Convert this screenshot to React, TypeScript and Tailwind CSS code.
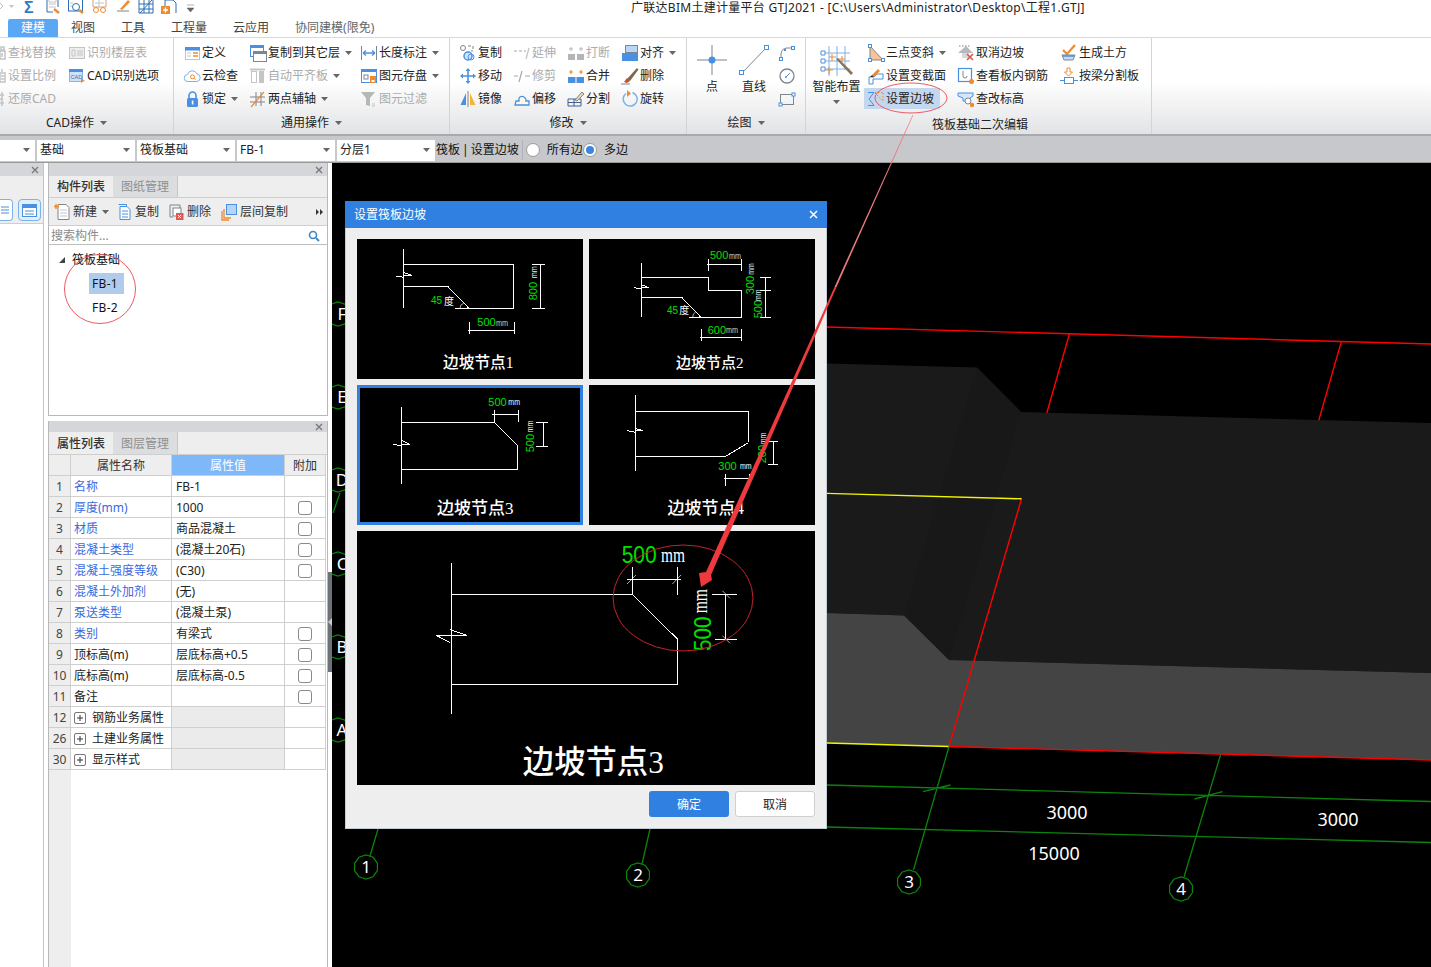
import React from "react";

const B = "#4a90e2", O = "#ef8a2f", G = "#7d858e", L = "#c2c4c6";

const I: Record<string, React.ReactNode> = {
  find: <path d="M12 3h3v3h-3zM11 7h5v8h-5zM13 9v4" stroke={L} strokeWidth="1.5" />,
  ratio: <path d="M13 2v3M11 6h5v9h-5zM12 9h3M12 12h3" stroke={L} strokeWidth="1.5" />,
  restore: <path d="M13 2v14M11 5h4M11 13h4M11 9h3" stroke={L} strokeWidth="1.5" />,
  tableRead: <><rect x="1.5" y="3.5" width="15" height="11" stroke={L} fill="#eee" /><path d="M4 6h3v6H4zM9 7h6M9 9h6M9 11h6" stroke={L} /></>,
  cadOpt: <><rect x="1.5" y="2.5" width="13" height="12" fill="#cfe1f6" stroke="#8db6e6" /><rect x="1" y="2" width="14" height="3" fill={B} /><text x="2.6" y="12" fontSize="5.5" fill="#3b6fb0" fontFamily="Liberation Sans">CAD</text><path d="M13 11l4 3-3 1-1 2z" fill={O} /></>,
  define: <><rect x="2.5" y="3.5" width="14" height="12" fill="#fff" stroke={L} /><rect x="2" y="3" width="15" height="3.5" fill={B} /><path d="M4 9h4M4 12h4" stroke={L} /><path d="M10 9h5M10 12h5" stroke={O} strokeWidth="1.6" /></>,
  cloud: <><path d="M5 14.5a3.5 3.5 0 0 1-.5-7 5 5 0 0 1 9.5-.5 3.8 3.8 0 0 1 0 7.5z" stroke="#7ab2ea" fill="#fff" /><circle cx="9.5" cy="9.8" r="2" stroke={O} /><path d="M11 11.3l1.5 1.2" stroke={O} /></>,
  lock: <><path d="M6 8V5.500a3.500 3.500 0 0 1 7 0V8" stroke={B} strokeWidth="1.6" /><rect x="4" y="8" width="11" height="9" rx="1.500" fill={B} /><rect x="8.800" y="10.500" width="1.600" height="4" fill="#fff" /></>,
  copyLayer: <><rect x="1.500" y="1.500" width="13" height="11" fill="#fff" stroke={B} /><rect x="1" y="1" width="14" height="3" fill={B} /><rect x="4.500" y="7.500" width="13" height="10" fill="#fff" stroke={G} /><rect x="4" y="7" width="14" height="3" fill={G} /></>,
  autoAlign: <><path d="M1 2.500h15" stroke={L} strokeWidth="2" /><rect x="2.500" y="4.500" width="5" height="11" stroke={L} /><rect x="10" y="4" width="5" height="12" fill={L} /></>,
  twoPoint: <><path d="M1 7h15M1 12h15M7 2v14M12 2v14" stroke={G} /><path d="M2 17L15 2" stroke={O} strokeWidth="1.200" /></>,
  lenDim: <><path d="M1.500 2v14M16.500 2v14" stroke={G} /><path d="M3 9h12M3 9l3-2.500M3 9l3 2.500M15 9l-3-2.500M15 9l-3 2.500" stroke={B} strokeWidth="1.300" /></>,
  save: <><rect x="1.500" y="2.500" width="15" height="13" fill="#fff" stroke={B} /><rect x="1" y="2" width="16" height="3" fill={B} /><rect x="4" y="8" width="4" height="4" stroke={G} /><rect x="10" y="9" width="6" height="7" fill={O} /><rect x="11.500" y="13" width="3" height="2" fill="#fff" /></>,
  filter: <><path d="M1 2h14l-5 6v8l-4-1V8z" fill="#b5b7b9" /><path d="M12 14h3M12 16h3" stroke={L} /></>,
  copy: <><circle cx="4" cy="4" r="2.500" stroke={G} /><path d="M9 2h3M14 2v3M12 7h2" stroke={G} /><circle cx="9" cy="12" r="4" stroke={B} strokeWidth="1.500" fill="#d6e7fa" /><circle cx="12" cy="13" r="3" stroke={B} /></>,
  move: <path d="M9 1l-2.500 3h5zM9 17l-2.500-3h5zM1 9l3-2.500v5zM17 9l-3-2.500v5zM8.200 4h1.600v10H8.200zM4 8.200h10v1.600H4z" fill={B} />,
  mirror: <><path d="M7 3L1.500 15H7z" fill={B} /><path d="M11 3l5.500 12H11z" fill="#f4b43a" /><path d="M9 1v16" stroke={G} /></>,
  extend: <path d="M1 7h3M6 7h3M11 7h2M13 15l3-11" stroke={L} strokeWidth="1.300" />,
  trim: <path d="M1 9h4M12 9h5M6 15l3-11" stroke={G} strokeOpacity="0.7" strokeWidth="1.200" />,
  offset: <path d="M2 15h14v-4h-3a3 3 0 0 0-1-3 3.500 3.500 0 0 0-6 0v3H3z" stroke={B} strokeWidth="1.300" fill="#fff8e8" />,
  breakI: <><rect x="1" y="10" width="7" height="6" fill="#b3b5b8" /><rect x="10" y="10" width="7" height="6" fill="#b3b5b8" /><path d="M4 3v4M2 5h4M14 3v4M12 5h4" stroke="#b3b5b8" /></>,
  merge: <><rect x="1" y="10" width="7.500" height="6" fill={B} /><rect x="9.500" y="10" width="7.500" height="6" fill={B} /><path d="M4 3v4M2 5h4M14 3v4M12 5h4" stroke={O} strokeWidth="1.200" /></>,
  split: <><path d="M1 9h13v7H1zM1 12.500h13M7 9v7" stroke="#41618c" /><path d="M8 10l7-8 2 2-7 7z" fill="#e8d9b0" stroke={G} /></>,
  align: <><rect x="4.500" y="1.500" width="12" height="7" fill="#b9d6f5" stroke={G} /><rect x="1" y="9" width="16" height="8" fill={B} /></>,
  del: <><path d="M6 12L16 1l1.500 1.500L9 14z" fill="#7b6a4d" /><path d="M3 15l3-4 3 3-3 2z" fill="#c4512d" /><path d="M0 17h9" stroke={G} /></>,
  rotate: <><path d="M5 3.500a7 7 0 1 0 6.500-1" stroke="#7ab2ea" strokeWidth="1.500" /><path d="M6 0v7l4-3.500z" fill={O} /></>,
  slope3: <><path d="M3 2v14h13z" fill="#f7c39a" stroke={G} /><rect x="1.500" y="0.500" width="3" height="3" fill="#fff" stroke={B} /><rect x="1.500" y="14.500" width="3" height="3" fill="#fff" stroke={B} /><rect x="14.500" y="14.500" width="3" height="3" fill="#fff" stroke={B} /></>,
  varSec: <><path d="M2 10h5l3-3h6v5H6v5H2z" stroke={B} fill="#fff" /><path d="M5 8l6-6 2 2-6 6z" fill={O} /><path d="M3 10l2-2 2 2" fill="#333" /></>,
  setSlope: <><path d="M1 2.500h6l-5 6.500 5 6.500H1" stroke={B} fill="none" /><path d="M8 2.500h8M8 3l8 8M16 3v8" stroke={O} strokeDasharray="1.500 1.500" /></>,
  cancel: <><path d="M1 9l8-7 7 7H1z" fill="#b5b9bd" /><rect x="5" y="9" width="7" height="5" fill="#d6d8da" /><path d="M2 2h12" stroke={G} strokeDasharray="1.500 1.500" /><path d="M10 10l6 6M16 10l-6 6" stroke="#d9534f" strokeWidth="1.600" /></>,
  viewRebar: <><rect x="1.500" y="1.500" width="13" height="13" stroke={B} fill="#fff" strokeWidth="1.200" /><path d="M6 4v5a2 2 0 0 0 4 0" stroke={G} /><circle cx="14.500" cy="14.500" r="2.500" fill={O} /></>,
  chgElev: <><path d="M1 3h15v3l-3 2v3H6V8L1 6z" fill="#d6e7fa" stroke={B} /><circle cx="11" cy="11" r="3" stroke={G} fill="#fff" /><circle cx="15" cy="15" r="2.200" fill={O} /></>,
  earth: <><path d="M3 6l4 4 8-9" stroke={O} strokeWidth="2.200" /><path d="M2 11h13l-2 5H4z" fill="#c7dbf3" stroke={G} /><path d="M3 12h11" stroke={B} strokeWidth="1.500" /></>,
  beamSplit: <><path d="M7 1h3v4h2.500L8.500 9 4.500 5H7z" stroke={O} fill="#fff" /><rect x="4.500" y="10.500" width="9" height="6" stroke={B} fill="#fff" /><path d="M0 13.500h4M14 13.500h4" stroke={B} /></>,
  arc: <><path d="M3 16V10a6 6 0 0 1 6-6h5" stroke={G} /><rect x="1.500" y="13.500" width="3" height="3" fill="#fff" stroke={B} /><rect x="13.500" y="2.500" width="3" height="3" fill="#fff" stroke={B} /><rect x="6" y="5" width="2" height="2" fill={B} /></>,
  circ: <><circle cx="9" cy="9" r="7" stroke={G} strokeWidth="1.300" /><path d="M8 10l4-4" stroke={B} /><circle cx="8" cy="10" r="1" fill={B} /></>,
  rectI: <><rect x="2.500" y="4.500" width="13" height="10" stroke={G} /><rect x="1" y="13" width="3" height="3" fill="#fff" stroke={B} /><rect x="14" y="3" width="3" height="3" fill="#fff" stroke={B} /></>,
  newI: <><path d="M4 1.500h8l3 3v12H4z" fill="#fff" stroke={G} /><path d="M6 7h7M6 10h7M6 13h7" stroke={L} /><path d="M2 1v5M0 3.500h5" stroke={O} strokeWidth="1.400" /></>,
  copyDoc: <><path d="M3.500 1.500h8v2" stroke={B} /><path d="M5 3.500h7l3 3v10H5z" fill="#fff" stroke={B} /><path d="M7 8h6M7 11h6M7 14h6" stroke={B} /></>,
  delDoc: <><path d="M3 2h10v3M3 2v12h3" stroke={G} /><rect x="6" y="5" width="8" height="8" stroke={G} fill="#fff" /><rect x="9" y="10" width="7.500" height="7" fill="#dc5b57" /><path d="M11 12l3 3M14 12l-3 3" stroke="#fff" /></>,
  layerCopy: <><path d="M2 8v9h7M4 6v9h7" stroke={O} strokeWidth="1.300" /><rect x="6.500" y="1.500" width="10" height="10" fill="#b7d5f6" stroke={B} /></>,
  q1: <><path d="M3 0v12h6M14 0v7" stroke="#2d6fb4" /><path d="M5 -1h7v3H5zM5 4h7M5 7h7" stroke={L} /><path d="M10 9l5 4" stroke={O} strokeWidth="2.500" /></>,
  q2: <><rect x="1.500" y="-3" width="14" height="14" stroke="#2d6fb4" fill="#fff" /><circle cx="9" cy="7" r="3.500" stroke="#2d6fb4" /><path d="M12 10l4 3" stroke={O} strokeWidth="2.500" /><path d="M3 3h3M3 6h2" stroke={L} /></>,
  q3: <><path d="M2-2h13v9H2z" stroke="#d99a7a" fill="#fff" /><path d="M4 3h9M8-2v9" stroke={L} /><circle cx="5" cy="10" r="2.500" stroke={O} /><circle cx="12" cy="10" r="2.500" stroke={O} /></>,
  q4: <><path d="M3 11h12" stroke={G} /><path d="M6 9l8-9 2 2-8 8z" fill={O} /></>,
  q5: <path d="M1 0v13h14V0M1 4h14M1 9h14M6 0v13M11 0v13M2 13l12-13" stroke="#2d6fb4" />,
  q6: <><path d="M4 13V0h8l3 3v10" stroke="#2d6fb4" /><rect x="0" y="6" width="9" height="8" fill={O} /><path d="M4.500 7.500v5M2 10h5" stroke="#fff" strokeWidth="1.400" /></>,
};

function Ic({ n, cls = "" }: { n: string; cls?: string }) {
  return (
    <svg width="18" height="18" viewBox="0 0 18 18" fill="none" className={"shrink-0 " + cls}>
      {I[n]}
    </svg>
  );
}

function Caret({ cls = "" }: { cls?: string }) {
  return (
    <svg width="7" height="4" viewBox="0 0 7 4" className={"shrink-0 " + cls}>
      <path d="M0 0h7L3.500 4z" fill="#666" />
    </svg>
  );
}

type It = { n: string; t: string; off?: boolean; caret?: boolean };

function Item({ n, t, off, caret }: It) {
  return (
    <div className={"flex items-center h-[23px] whitespace-nowrap " + (off ? "text-[#ababab]" : "text-[#222222]")}>
      <Ic n={n} cls="mr-px" />
      <span>{t}</span>
      {caret && <Caret cls="ml-[5px]" />}
    </div>
  );
}

function Col({ w, items, cls = "" }: { w: string; items: It[]; cls?: string }) {
  return (
    <div className={"flex flex-col shrink-0 " + w + " " + cls}>
      {items.map((i) => (
        <Item key={i.t} {...i} />
      ))}
    </div>
  );
}

function Group({ w, label, labelCls = "pt-[2px]", children, caret = true }: { w: string; label: string; labelCls?: string; children: React.ReactNode; caret?: boolean }) {
  return (
    <div className={"flex flex-col shrink-0 h-full border-r border-[#d2d4d6] overflow-hidden " + w}>
      <div className="flex h-[72px] pt-[3px]">{children}</div>
      <div className={"flex-1 flex items-center justify-center gap-[6px] text-[#222222] " + labelCls}>
        <span>{label}</span>
        {caret && <Caret />}
      </div>
    </div>
  );
}

function Ribbon() {
  return (
    <div className="flex h-[96px] bg-linear-to-b from-white from-45% to-[#e2e3e5]">
      <Group w="w-[174px]" label="CAD操作" labelCls="pr-[20px] pt-[2px]">
        <Col w="w-[79px] -ml-[11px]" items={[{ n: "find", t: "查找替换", off: true }, { n: "ratio", t: "设置比例", off: true }, { n: "restore", t: "还原CAD", off: true }]} />
        <Col w="w-[100px]" items={[{ n: "tableRead", t: "识别楼层表", off: true }, { n: "cadOpt", t: "CAD识别选项" }]} />
      </Group>
      <Group w="w-[276px]" label="通用操作">
        <Col w="w-[66px] ml-[9px]" items={[{ n: "define", t: "定义" }, { n: "cloud", t: "云检查" }, { n: "lock", t: "锁定", caret: true }]} />
        <Col w="w-[111px]" items={[{ n: "copyLayer", t: "复制到其它层", caret: true }, { n: "autoAlign", t: "自动平齐板", off: true, caret: true }, { n: "twoPoint", t: "两点辅轴", caret: true }]} />
        <Col w="w-[85px]" items={[{ n: "lenDim", t: "长度标注", caret: true }, { n: "save", t: "图元存盘", caret: true }, { n: "filter", t: "图元过滤", off: true }]} />
      </Group>
      <Group w="w-[237px]" label="修改">
        <Col w="w-[54px] ml-[9px]" items={[{ n: "copy", t: "复制" }, { n: "move", t: "移动" }, { n: "mirror", t: "镜像" }]} />
        <Col w="w-[54px]" items={[{ n: "extend", t: "延伸", off: true }, { n: "trim", t: "修剪", off: true }, { n: "offset", t: "偏移" }]} />
        <Col w="w-[54px]" items={[{ n: "breakI", t: "打断", off: true }, { n: "merge", t: "合并" }, { n: "split", t: "分割" }]} />
        <Col w="w-[60px]" items={[{ n: "align", t: "对齐", caret: true }, { n: "del", t: "删除" }, { n: "rotate", t: "旋转" }]} />
      </Group>
      <Group w="w-[119px]" label="绘图">
        <div className="flex flex-col items-center w-[50px] pt-[3px]">
          <svg width="32" height="32" viewBox="0 0 32 32" fill="none">
            <path d="M16 1v30M1 16h30" stroke={G} />
            <circle cx="16" cy="16" r="3.500" fill={B} />
          </svg>
          <span className="mt-[3px] leading-4 text-[#222222]">点</span>
        </div>
        <div className="flex flex-col items-center w-[34px] pt-[3px]">
          <svg width="32" height="32" viewBox="0 0 32 32" fill="none">
            <path d="M4 29L28 4" stroke={G} />
            <rect x="1.500" y="26.500" width="4" height="4" fill="#fff" stroke={B} />
            <rect x="26.500" y="1.500" width="4" height="4" fill="#fff" stroke={B} />
          </svg>
          <span className="mt-[3px] leading-4 text-[#222222] whitespace-nowrap">直线</span>
        </div>
        <div className="flex flex-col ml-[7px]">
          {["arc", "circ", "rectI"].map((n) => (
            <div key={n} className="h-[23px] flex items-center">
              <Ic n={n} />
            </div>
          ))}
        </div>
      </Group>
      <Group w="w-[346px]" label="筏板基础二次编辑" caret={false} labelCls="pl-[3px] pt-[6px]">
        <div className="flex flex-col items-center w-[61px] pt-[3px]">
          <svg width="34" height="34" viewBox="0 0 34 34" fill="none">
            <path d="M2 9h28M2 17h28M2 25h28M9 2v30M17 2v30M25 2v24" stroke="#7fb0e6" />
            <path d="M1 7h4v4H1zM1 15h4v4H1zM1 23h4v4H1z" fill="#fff" stroke={B} />
            <path d="M16 15l15 16 2-2-15-15z" fill="#8b7350" />
            <path d="M12 10v7M9 13h7M22 12v6M19 15h6M9 23v7M6 26h7" stroke={O} />
          </svg>
          <span className="mt-[1px] leading-4 text-[#222222] whitespace-nowrap">智能布置</span>
          <Caret cls="mt-[5px]" />
        </div>
        <div className="flex flex-col w-[90px] shrink-0">
          <Item n="slope3" t="三点变斜" caret />
          <Item n="varSec" t="设置变截面" />
          <div className="flex items-center h-[21px] mt-px w-[76px] -ml-[3px] pl-[3px] bg-[#c3d7ef] text-[#222222]">
            <Ic n="setSlope" cls="mr-px" />
            <span>设置边坡</span>
          </div>
        </div>
        <Col w="w-[103px]" items={[{ n: "cancel", t: "取消边坡" }, { n: "viewRebar", t: "查看板内钢筋" }, { n: "chgElev", t: "查改标高" }]} />
        <Col w="w-[90px]" items={[{ n: "earth", t: "生成土方" }, { n: "beamSplit", t: "按梁分割板" }]} />
      </Group>
    </div>
  );
}

function Select({ w, t }: { w: string; t: string }) {
  return (
    <div className={"flex items-center justify-between h-[21px] bg-white pl-[3px] pr-[5px] text-[#222222] shrink-0 " + w}>
      <span>{t}</span>
      <Caret />
    </div>
  );
}

function Radio({ on }: { on?: boolean }) {
  return (
    <span className="flex items-center justify-center w-[14px] h-[14px] rounded-full bg-white border border-[#9a9a9a] shrink-0">
      {on && <span className="w-[8px] h-[8px] rounded-full bg-[#3a86dc]" />}
    </span>
  );
}

function PropBar() {
  return (
    <div className="flex items-center h-[29px] pt-[2px] bg-[#c6c8cb] border-t-2 border-[#a8aaad] border-b border-b-[#9a9a9a] gap-[2px] text-[#111111] whitespace-nowrap">
      <Select w="w-[35px]" t="" />
      <Select w="w-[98px]" t="基础" />
      <Select w="w-[98px]" t="筏板基础" />
      <Select w="w-[98px]" t="FB-1" />
      <Select w="w-[98px]" t="分层1" />
      <span className="-ml-px [word-spacing:-1px]">筏板 | 设置边坡</span>
      <span className="w-px h-[20px] bg-[#b0b2b5] ml-[1px]" />
      <span className="ml-[1px]"><Radio /></span>
      <span className="ml-[5px]">所有边</span>
      <span className="-ml-[2px]"><Radio on /></span>
      <span className="ml-[5px]">多边</span>
    </div>
  );
}

function PanelHead({ h = "h-[13px]" }: { h?: string }) {
  return (
    <div className={"bg-[#d4d6da] flex items-center justify-end pr-[4px] shrink-0 " + h}>
      <svg width="8" height="8" viewBox="0 0 8 8"><path d="M1 1l6 6M7 1L1 7" stroke="#777" strokeWidth="1.300" /></svg>
    </div>
  );
}

function Tabs({ a, b, h = "h-[22px]" }: { a: string; b: string; h?: string }) {
  return (
    <div className={"flex bg-[#eeeeee] shrink-0 border-b border-[#cfcfcf] " + h}>
      <div className="w-[64px] flex items-center justify-center pt-px font-medium text-[#333333]">{a}</div>
      <div className="w-[65px] flex items-center justify-center pt-px bg-[#dcdddf] text-[#8f8f8f] border-r border-[#c8c8c8]">{b}</div>
    </div>
  );
}

const rows: [string, string, boolean, string, boolean][] = [
  ["1", "名称", true, "FB-1", false],
  ["2", "厚度(mm)", true, "1000", true],
  ["3", "材质", true, "商品混凝土", true],
  ["4", "混凝土类型", true, "(混凝土20石)", true],
  ["5", "混凝土强度等级", true, "(C30)", true],
  ["6", "混凝土外加剂", true, "(无)", false],
  ["7", "泵送类型", true, "(混凝土泵)", false],
  ["8", "类别", true, "有梁式", true],
  ["9", "顶标高(m)", false, "层底标高+0.5", true],
  ["10", "底标高(m)", false, "层底标高-0.5", true],
  ["11", "备注", false, "", true],
];
const groups: [string, string][] = [["12", "钢筋业务属性"], ["26", "土建业务属性"], ["30", "显示样式"]];

function PropTable() {
  const cell = "h-[21px] flex items-center pt-px border-b border-r border-[#cfcfcf] ";
  return (
    <div className="flex-1 relative">
      <div className="absolute left-0 top-0 bottom-0 w-[22px] bg-[#eeeeee]" />
      <div className="relative grid grid-cols-[22px_101px_113px_41px] w-[277px]">
        <div className={cell + "bg-[#eeeeee]"} />
        <div className={cell + "bg-[#eeeeee] justify-center text-[#333333]"}>属性名称</div>
        <div className={cell + "bg-[#7eb8f8] justify-center text-white"}>属性值</div>
        <div className={cell + "bg-[#eeeeee] justify-center text-[#333333]"}>附加</div>
        {rows.map(([i, n, blue, v, c]) => (
          <React.Fragment key={i}>
            <div className={cell + "bg-[#eeeeee] justify-center text-[#444444]"}>{i}</div>
            <div className={cell + "pl-[3px] bg-white " + (blue ? "text-[#3a68e0]" : "text-[#222222]")}>{n}</div>
            <div className={cell + "pl-[4px] bg-white text-[#222222]"}>{v}</div>
            <div className={cell + "justify-center bg-white"}>
              {c && <span className="w-[14px] h-[14px] rounded-[3px] border border-[#8a8a8a] bg-white" />}
            </div>
          </React.Fragment>
        ))}
        {groups.map(([i, n]) => (
          <React.Fragment key={i}>
            <div className={cell + "bg-[#eeeeee] justify-center text-[#444444]"}>{i}</div>
            <div className={cell + "pl-[3px] bg-white text-[#222222]"}>
              <span className="w-[12px] h-[12px] mr-[6px] rounded-[2px] border border-[#777777] flex items-center justify-center">
                <svg width="8" height="8" viewBox="0 0 8 8"><path d="M4 1v6M1 4h6" stroke="#333" /></svg>
              </span>
              {n}
            </div>
            <div className={cell + "bg-[#ebebeb]"} />
            <div className={cell + "bg-white"} />
          </React.Fragment>
        ))}
      </div>
    </div>
  );
}

function LeftCol() {
  return (
    <div className="w-[44px] shrink-0 flex flex-col border-r border-[#c4c4c4]">
      <PanelHead />
      <div className="h-[48px] bg-[#eeeeee] border-b border-[#cfcfcf] flex items-end pb-[2px] gap-[5px] overflow-hidden">
        <div className="w-[13px] h-[22px] rounded-r-[4px] border border-l-0 border-[#7ab2ea] bg-white flex items-center justify-center">
          <svg width="10" height="10" viewBox="0 0 10 10"><path d="M0 2h8M0 5h8M0 8h8" stroke={B} /></svg>
        </div>
        <div className="w-[23px] h-[22px] rounded-[4px] border border-[#7ab2ea] bg-[#e3effc] flex items-center justify-center">
          <svg width="15" height="13" viewBox="0 0 15 13"><rect x="0.500" y="0.500" width="14" height="12" fill="#fff" stroke={B} /><rect width="15" height="4" fill={B} /><path d="M3 7h9M3 10h9" stroke={B} /></svg>
        </div>
      </div>
    </div>
  );
}

function CompPanel() {
  return (
    <div className="h-[253px] flex flex-col shrink-0 border border-t-0 border-[#b8b8b8]">
      <PanelHead />
      <Tabs a="构件列表" b="图纸管理" />
      <div className="flex items-center h-[28px] pt-px bg-[#eeeeee] border-b border-[#cfcfcf] pl-[5px] text-[#333333] shrink-0 relative">
        <Ic n="newI" />
        <span className="ml-[1px]">新建</span>
        <Caret cls="ml-[5px]" />
        <Ic n="copyDoc" cls="ml-[6px]" />
        <span className="ml-[2px]">复制</span>
        <Ic n="delDoc" cls="ml-[8px]" />
        <span className="ml-[2px]">删除</span>
        <Ic n="layerCopy" cls="ml-[9px]" />
        <span className="ml-[2px]">层间复制</span>
        <svg width="8" height="6" viewBox="0 0 8 6" className="ml-auto mr-[3px]"><path d="M0 0l3 3-3 3zM4 0l3 3-3 3z" fill="#333" /></svg>
      </div>
      <div className="flex items-center justify-between h-[19px] pt-px bg-white border-b border-[#bdbdbd] pl-[2px] pr-[7px] text-[#8a8a8a] shrink-0">
        <span>搜索构件...</span>
        <svg width="12" height="12" viewBox="0 0 12 12" fill="none"><circle cx="5" cy="5" r="3.500" stroke="#3a86c8" strokeWidth="1.600" /><path d="M8 8l3 3" stroke="#3a86c8" strokeWidth="1.800" /></svg>
      </div>
      <div className="flex-1 bg-white pt-[7px]">
        <div className="flex items-center h-[16px] pl-[10px] text-[#111111]">
          <svg width="6" height="6" viewBox="0 0 6 6" className="mr-[7px]"><path d="M6 0v6H0z" fill="#444" /></svg>
          <span>筏板基础</span>
        </div>
        <div className="flex flex-col items-start pl-[40px] mt-[5px] gap-[3px] text-[#111111]">
          <div className="w-[35px] h-[21px] pt-px bg-[#b0cced] flex items-center pl-[3px] tracking-[0.3px]">FB-1</div>
          <div className="w-[35px] h-[21px] pt-px flex items-center pl-[3px] tracking-[0.3px]">FB-2</div>
        </div>
      </div>
    </div>
  );
}

function Canvas() {
  const circles: [number, number, string][] = [[366, 867, "1"], [638, 875, "2"], [909, 882, "3"], [1181, 889, "4"]];
  const side: [number, string][] = [[314, "F"], [397, "E"], [480, "D"], [564, "C"], [647, "B"], [730, "A"]];
  const oct = (x: number, y: number, r: number) =>
    Array.from({ length: 10 }, (_, i) => {
      const a = (i * Math.PI) / 5 + Math.PI / 10;
      return (x + r * Math.cos(a)).toFixed(1) + "," + (y + r * Math.sin(a)).toFixed(1);
    }).join(" ");
  return (
    <div className="flex-1 bg-black overflow-hidden">
      <svg viewBox="332 163 1099 804" className="block w-full h-full" fill="none">
        <path d="M827 363.600L977 367.500L1021 412L1431 423V673L949 660L904 615.500L827 613Z" fill="#1a1a1a" />
        <path d="M977 367.500L1021 412L949 660L904 615.500Z" fill="#181818" />
        <path d="M827 613L904 615.500L949 660L1431 673V760L949 746.500L827 743Z" fill="#444444" />
        <path d="M827 327L1431 344M1069.400 334L1046.800 413M1341.400 341.400L1318.800 420.300M1021.500 498.800L949 746.500L1431 760" stroke="#ff0000" strokeWidth="1.400" />
        <path d="M827 493.400L1021.500 498.800M827 743L949 746.500" stroke="#f4f400" strokeWidth="1.400" />
        <path d="M949 746.500L913.500 870M1220.600 754.500L1184 877M827 785L1431 801.500M827 827L1431 842.500M923 791.600L950.500 785M1194.500 799L1222.500 791.600M378 829L370 856M650 829L642 864M340 493L333 513" stroke="#0a840a" strokeWidth="1.300" />
        {circles.map(([x, y, t]) => (
          <g key={t}>
            <polygon points={oct(x, y, 12)} stroke="#0a840a" strokeWidth="1.200" fill="#000" />
            <text x={x} y={y + 6} textAnchor="middle" fill="#fff" fontSize="17" fontFamily="Noto Sans">{t}</text>
          </g>
        ))}
        {side.map(([y, t]) => (
          <g key={t}>
            <polygon points={oct(338, y, 12)} stroke="#0a840a" strokeWidth="1.200" fill="#000" />
            <text x={342} y={y + 6} textAnchor="middle" fill="#fff" fontSize="17" fontFamily="Noto Sans">{t}</text>
          </g>
        ))}
        <g fill="#fff" fontSize="18" fontFamily="Noto Sans" textAnchor="middle">
          <text x="1067" y="819">3000</text>
          <text x="1338" y="826">3000</text>
          <text x="1054" y="860">15000</text>
        </g>
      </svg>
    </div>
  );
}

const GREEN = "#00e000";
function Num({ x, y, t, s = 33, rot, fill = GREEN, font = "Liberation Sans", w }: { x: number; y: number; t: string; s?: number; rot?: boolean; fill?: string; font?: string; w?: number }) {
  return (
    <text x={x} y={y} fontSize={s} fill={fill} stroke="none" fontFamily={font} textLength={w} lengthAdjust={w ? "spacingAndGlyphs" : undefined} transform={rot ? `rotate(-90 ${x} ${y})` : undefined}>
      {t}
    </text>
  );
}

function Title({ x, y, s, t }: { x: number; y: number; s: number; t: string }) {
  return (
    <text x={x} y={y} fontSize={s} fontWeight={500} textAnchor="middle" fill="#fff" stroke="none" fontFamily="'Liberation Serif','Noto Sans CJK SC',serif">
      {t}
    </text>
  );
}

function Diagram({ vb, d, children }: { vb: string; d: string; children: React.ReactNode }) {
  return (
    <svg viewBox={vb} className="block w-full h-full" fill="none" preserveAspectRatio="none">
      <path d={d} stroke="#fff" strokeWidth="3" shapeRendering="crispEdges" />
      {children}
    </svg>
  );
}

function Dialog() {
  return (
    <div className="absolute left-[345px] top-[201px] w-[482px] h-[628px] bg-[#eeeeee] flex flex-col border border-t-0 border-[#c4ccd6]">
      <div className="h-[27px] bg-[#2f80e0] text-white flex items-center justify-between pl-[9px] pr-[9px] -mx-px shrink-0">
        <span>设置筏板边坡</span>
        <svg width="9" height="9" viewBox="0 0 9 9"><path d="M1 1l7 7M8 1L1 8" stroke="#fff" strokeWidth="1.500" /></svg>
      </div>
      <div className="px-[11px] pt-[11px]">
        <div className="grid grid-cols-[226px_226px] grid-rows-[140px_140px] gap-[6px]">
          <div className="bg-black">
            <Diagram vb="36 117 678 420" d="M175 148V323M175 193H505V325H330M175 259H308L372 325M153 228L175 232M178 218L200 226H175M372 365V403M507 365V403M368 392H508M585 192V326M562 192H600M562 326H600">
              <path d="M345 325Q345 312 356 310" stroke="#fff" strokeWidth="2" />
              <Num x={397} y={378} t="500" />
              <Num x={453} y={377} t="mm" s={26} fill="#e8c890" w={36} />
              <Num x={575} y={301} t="800" rot />
              <Num x={575} y={235} t="mm" s={26} fill="#dff" w={36} rot />
              <Num x={258} y={311} t="45" s={30} />
              <Num x={297} y={314} t="度" s={30} fill="#fff" font="Noto Sans CJK SC" />
              <Title x={400} y={504} s={47} t="边坡节点1" />
            </Diagram>
          </div>
          <div className="bg-black">
            <Diagram vb="732 117 678 420" d="M889 190V350M889 232H1090V271H1190V352H1032M889 292H1010L1068 352M868 263L889 267M891 255L912 263H889M1090 178V212M1190 178V212M1086 192H1192M1068 388V424M1190 388V424M1064 412H1192M1262 232V354M1245 232H1278M1245 271H1278M1245 352H1278">
              <path d="M1043 352Q1043 340 1052 336" stroke="#fff" strokeWidth="2" />
              <Num x={1095} y={176} t="500" />
              <Num x={1152} y={176} t="mm" s={26} fill="#b8dcff" w={36} />
              <Num x={1226} y={283} t="300" rot />
              <Num x={1227} y={224} t="mm" s={26} fill="#dff" w={34} rot />
              <Num x={1250} y={355} t="500" rot />
              <Num x={1249} y={303} t="mm" s={26} fill="#dff" w={34} rot />
              <Num x={966} y={341} t="45" s={30} />
              <Num x={1003} y={342} t="度" s={30} fill="#fff" font="Noto Sans CJK SC" />
              <Num x={1088} y={401} t="600" />
              <Num x={1143} y={400} t="mm" s={26} fill="#e8c890" w={36} />
              <Title x={1094} y={505} s={45} t="边坡节点2" />
            </Diagram>
          </div>
          <div className="bg-black border-[3px] border-[#2f80e0]">
            <Diagram vb="45 564 660 402" d="M169 621V851M169 667H448L517 736V808H169M145 733L169 737M172 722L195 733H169M448 630V667M519 630V667M440 642H522M572 667H608M572 738H608M594 667V740">
              <Num x={430} y={617} t="500" />
              <Num x={490} y={615} t="mm" s={28} fill="#fff" w={35} />
              <Num x={566} y={757} t="500" rot />
              <Num x={565} y={697} t="mm" s={28} fill="#fff" w={35} rot />
              <Title x={391} y={943} s={51} t="边坡节点3" />
            </Diagram>
          </div>
          <div className="bg-black">
            <Diagram vb="732 555 678 420" d="M871 585V812M871 634H1210V725M1210 728L1142 769H871M847 692L871 697M874 686L893 692H871M1268 723H1298M1268 792H1298M1284 723V794M1140 822V858M1212 822V858M1136 834H1214">
              <Num x={1264} y={790} t="200" rot />
              <Num x={1262} y={733} t="mm" s={28} fill="#fff" w={35} rot />
              <Num x={1120} y={809} t="300" />
              <Num x={1185} y={808} t="mm" s={28} fill="#fff" w={35} />
              <Title x={1082} y={943} s={51} t="边坡节点4" />
            </Diagram>
          </div>
        </div>
        <div className="h-[254px] bg-black mt-[6px]">
          <Diagram vb="36 18 1374 762" d="M319 114V566M319 208H862L997 342V478H319M274 331H365L316 314M274 331L315 353M862 127V208M997 127V210M846 163H1008M1101 208H1176M1110 343H1176M1141 208V343">
            <path d="M846 177L873 150M982 177L1008 150M1132 197L1155 220M1132 332L1155 355" stroke="#fff" strokeWidth="2" />
            <Num x={830} y={113} t="500" s={72} w={105} />
            <Num x={948} y={110} t="mm" s={66} w={72} fill="#fff" font="Liberation Serif" />
            <Num x={1097} y={378} t="500" s={72} w={103} rot />
            <Num x={1087} y={265} t="mm" s={66} w={73} fill="#fff" font="Liberation Serif" rot />
            <Title x={745} y={743} s={94} t="边坡节点3" />
          </Diagram>
        </div>
        <div className="flex justify-end gap-[6px] mt-[6px]">
          <button className="w-[80px] h-[26px] pt-px rounded-[3px] bg-[#2f80e0] text-white">确定</button>
          <button className="w-[80px] h-[26px] pt-px rounded-[3px] bg-white border border-[#d0d0d0] text-[#222222]">取消</button>
        </div>
      </div>
    </div>
  );
}

export default function App() {
  const q = ["q1", "q2", "q3", "q4", "q5", "q6"];
  return (
    <div className="relative w-[1431px] h-[967px] overflow-hidden bg-white flex flex-col text-[12px] leading-none font-['Noto_Sans','Noto_Sans_CJK_SC',sans-serif]">
      <div className="flex items-start h-[19px] shrink-0 relative">
        <div className="flex items-start w-[631px] shrink-0 h-[16px] overflow-hidden">
          <svg width="16" height="10" viewBox="0 0 16 10" className="mt-[2px]" fill="none"><path d="M0 1l3 3-3 3" stroke={L} /><path d="M9 3h5l-2.500 3z" fill={L} /></svg>
          <span className="ml-[8px] text-[16px] leading-[16px] font-bold text-[#2d7cc8] font-['Liberation_Sans']">Σ</span>
          <div className="flex ml-[10px] gap-[5.500px] h-[14px] overflow-hidden">
            {q.map((n) => (
              <Ic n={n} key={n} />
            ))}
          </div>
          <svg width="7" height="8" viewBox="0 0 7 8" className="ml-[8px] mt-[4px]"><path d="M0 1h7M0 4h7L3.500 8z" fill="#666" stroke="#666" strokeWidth="0.500" /></svg>
        </div>
        <span className="text-[#222222] leading-[16px] tracking-[0.28px] whitespace-nowrap">广联达BIM土建计量平台 GTJ2021 - [C:\Users\Administrator\Desktop\工程1.GTJ]</span>
      </div>
      <div className="flex items-stretch h-[19px] shrink-0 border-b border-[#d9d9d9] text-[#444444] pl-[8px]">
        <div className="w-[50px] flex items-center justify-center bg-[#5aa8f5] text-white rounded-t-[2px]">建模</div>
        <div className="flex items-center ml-[13px] gap-[26px]">
          <span>视图</span>
          <span>工具</span>
          <span>工程量</span>
          <span>云应用</span>
          <span className="text-[#666666]">协同建模(限免)</span>
        </div>
      </div>
      <Ribbon />
      <PropBar />
      <div className="flex flex-1 min-h-0 bg-white">
        <LeftCol />
        <div className="w-[280px] ml-[4px] shrink-0 flex flex-col">
          <CompPanel />
          <div className="flex-1 flex flex-col mt-[5px] border-l border-r border-[#b8b8b8]">
            <PanelHead h="h-[11px]" />
            <Tabs a="属性列表" b="图层管理" h="h-[23px]" />
            <PropTable />
          </div>
        </div>
        <div className="w-[4px] shrink-0 relative">
          <div className="absolute left-0 top-[409px] w-[4px] h-[100px] bg-[#6d7278] flex items-center">
            <svg width="4" height="8" viewBox="0 0 4 8"><path d="M4 0v8L0 4z" fill="#c8cacc" /></svg>
          </div>
        </div>
        <Canvas />
      </div>
      <Dialog />
      <svg className="absolute inset-0 pointer-events-none" width="1431" height="967" viewBox="0 0 1431 967" fill="none">
        <ellipse cx="100" cy="289" rx="35.500" ry="34.500" stroke="#ec5a62" />
        <ellipse cx="911" cy="98" rx="36" ry="15" stroke="#ec5a62" />
        <ellipse cx="683" cy="598" rx="70" ry="53" stroke="#c4242c" />
        <path d="M912.600 115L913.300 115L836.500 287L834.500 287Z" fill="#ee7a7e" />
        <path d="M834.500 287L836.500 287L711 575L712 580L701 587L699 573L706 572Z" fill="#ee3a3e" />
      </svg>
    </div>
  );
}
